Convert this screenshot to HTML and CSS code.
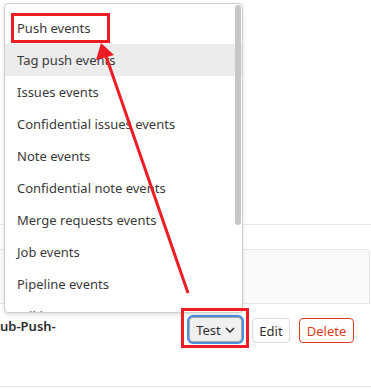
FILE: index.html
```html
<!DOCTYPE html>
<html lang="en">
<head>
  <meta charset="UTF-8" />
  <meta name="viewport" content="width=device-width, initial-scale=1.0"/>
  <title>Webhooks</title>
  <link rel="stylesheet" href="styles.css">
</head>
<body>
  <div class="page">
    <div class="top-block"></div>
    <div class="panel-head"></div>
    <div class="hook-row">
      <div class="hook-url">ub-Push-</div>
      <div class="hook-actions">
        <button class="btn btn-test">Test
          <svg class="chevron" width="10" height="6" viewBox="0 0 10 6"><path d="M1 1l4 4 4-4" fill="none" stroke="#333" stroke-width="1.6"/></svg>
        </button>
        <button class="btn btn-edit">Edit</button>
        <button class="btn btn-delete">Delete</button>
      </div>
    </div>
  </div>

  <div class="dropdown">
    <ul class="dropdown-list">
      <li>Push events</li>
      <li class="hover">Tag push events</li>
      <li>Issues events</li>
      <li>Confidential issues events</li>
      <li>Note events</li>
      <li>Confidential note events</li>
      <li>Merge requests events</li>
      <li>Job events</li>
      <li>Pipeline events</li>
      <li>Wiki page events</li>
    </ul>
    <div class="scrollbar"></div>
  </div>

  <div class="mark mark-item"></div>
  <div class="mark mark-test"></div>

  <svg class="arrow" width="371" height="389" viewBox="0 0 371 389">
    <line x1="188" y1="293" x2="106" y2="56" stroke="#ee1c25" stroke-width="3"/>
    <polygon points="101,43 96,60 114,55" fill="#ee1c25"/>
  </svg>
</body>
</html>
```

FILE: styles.css
```css
body {
  margin: 0;
  font-family: "Noto Sans", sans-serif;
  font-size: 13px;
  color: #2e2e2e;
  background-color: #fff;
  position: relative;
  width: 371px;
  height: 389px;
  overflow: hidden;
}
.top-block {
  height: 224px;
  border-bottom: 1px solid #e5e5e5;
}
.panel-head {
  margin-top: 24px;
  margin-left: -5px;
  margin-right: 1px;
  height: 53px;
  background-color: #fafafa;
  border: 1px solid #e5e5e5;
  border-radius: 0 4px 0 0;
}
.hook-row {
  display: flex;
  justify-content: space-between;
  align-items: flex-start;
  height: 70px;
  padding-top: 12px;
  border-bottom: 1px solid #e5e5e5;
}
.hook-url {
  font-weight: 600;
  font-size: 13px;
  padding-top: 1px;
}
.hook-actions {
  display: flex;
  align-items: center;
  margin-right: 17px;
}
.btn {
  font-family: "Noto Sans", sans-serif;
  font-size: 13px;
  color: #2e2e2e;
  background-color: #fff;
  border: 1px solid #dcdcdc;
  border-radius: 4px;
  height: 25px;
  padding: 0;
  margin-top: 2px;
}
.btn-test {
  display: flex;
  align-items: center;
  justify-content: center;
  gap: 4px;
  width: 53px;
  height: 25px;
  margin-top: 0;
  background-color: #f0f0f0;
  border-color: #a8a8a8;
  box-shadow: 0 0 0 2px #4a90e2;
}
.btn-edit {
  width: 38px;
  margin-left: 10px;
}
.btn-delete {
  width: 55px;
  margin-left: 9px;
  color: #db3b21;
  border-color: #db3b21;
}
.dropdown {
  position: absolute;
  left: 4px;
  top: 3px;
  width: 237px;
  height: 308px;
  background-color: #fff;
  border: 1px solid #d0d0d0;
  border-radius: 4px;
  box-shadow: 0 2px 4px rgba(0, 0, 0, 0.12);
  overflow: hidden;
}
.dropdown-list {
  list-style: none;
  margin: 0;
  padding: 8px 0 0;
}
.dropdown-list li {
  height: 32px;
  line-height: 32px;
  padding-left: 12px;
  color: #3a3a3a;
  white-space: nowrap;
}
.dropdown-list li.hover {
  background-color: #ececec;
}
.scrollbar {
  position: absolute;
  right: 1px;
  top: 1px;
  width: 6px;
  height: 220px;
  border-radius: 3px;
  background-color: #c6c6c6;
}
.mark {
  position: absolute;
  border: 3px solid #ee1c25;
  box-sizing: border-box;
}
.mark-item {
  left: 11px;
  top: 13px;
  width: 99px;
  height: 30px;
}
.mark-test {
  left: 181px;
  top: 308px;
  width: 68px;
  height: 40px;
}
.arrow {
  position: absolute;
  left: 0;
  top: 0;
}
```
